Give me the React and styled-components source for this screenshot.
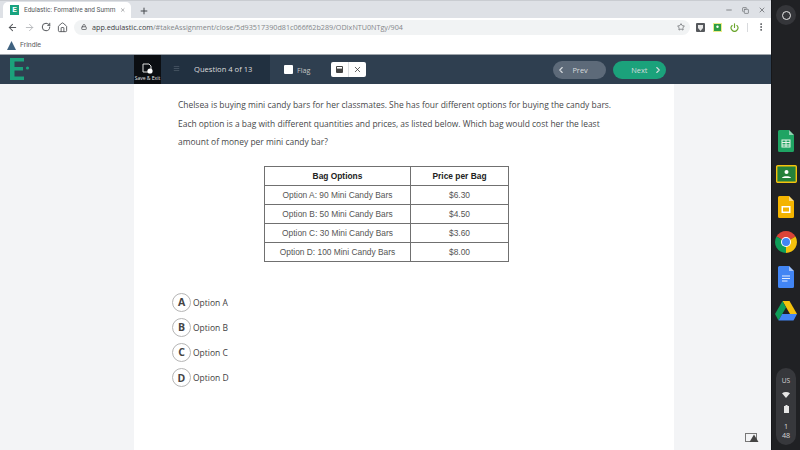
import React from "react";
import styled, { createGlobalStyle } from "styled-components";
import { ArrowLeft, ArrowRight, RotateCw, Home, Lock, Star, MoreVertical, Plus, X, Minus, Copy, ChevronLeft, ChevronRight, Menu, Power } from "lucide-react";

const Global = createGlobalStyle`
  html, body { margin: 0; padding: 0; width: 800px; height: 450px; overflow: hidden; background: #202124; }
  * { box-sizing: border-box; }
`;
const Screen = styled.div`display: flex; width: 800px; height: 450px; font-family: "Open Sans", sans-serif;`;
const Win = styled.div`width: 771px; display: flex; flex-direction: column; background: #fff;`;

const TabStrip = styled.div`height: 18px; background: #dee1e6; display: flex; align-items: flex-end; padding-left: 3px; border-top: 1px solid #c9ccd1; font-family: Roboto, sans-serif;`;
const Tab = styled.div`width: 128px; height: 16px; background: #fff; border-radius: 5px 5px 0 0; display: flex; align-items: center; padding: 0 5px 0 7px; gap: 5px; font-size: 6.5px; color: #55585c; white-space: nowrap;`;
const TabTitle = styled.span`flex: 1;`;
const Fav = styled.div`width: 9px; height: 10px; background: #19a37f; color: #fff; font-size: 8px; line-height: 10px; font-weight: 700; text-align: center; flex: none;`;
const NewTab = styled.div`margin: 0 0 2px 8px; display: flex; color: #45484c;`;
const WinBtns = styled.div`margin-left: auto; display: flex; gap: 9px; padding: 0 5px 4px 0; align-items: center; color: #55585c;`;

const Toolbar = styled.div`height: 18px; background: #fff; display: flex; align-items: center; padding-left: 7px;`;
const NavIcons = styled.div`display: flex; gap: 6px; color: #55585c; align-items: center; width: 67px;`;
const Omni = styled.div`width: 616px; height: 15px; border-radius: 8px; background: #f1f3f4; display: flex; align-items: center; padding: 0 5px 0 7px; font-size: 7.2px; color: #84878b; white-space: nowrap; gap: 5px;`;
const Host = styled.span`color: #3c4043;`;
const Url = styled.span`flex: 1;`;
const Exts = styled.div`display: flex; align-items: center; margin-left: 6px; gap: 8px; color: #55585c;`;
const ExtSvg = styled.svg`display: block;`;
const Sep = styled.div`width: 1px; height: 9px; background: #d8dadd;`;

const Bookmarks = styled.div`height: 19px; background: #fff; border-bottom: 1px solid #9ea4aa; display: flex; align-items: center; padding: 0 0 0 7px; gap: 4px; font-size: 7px; color: #5a5d61; font-family: Roboto, sans-serif;`;

const Nav = styled.div`height: 29px; background: #2f3f50; display: flex; align-items: stretch; padding-left: 10px; color: #fff;`;
const Logo = styled.div`width: 124px; display: flex; align-items: center; padding-bottom: 1px;`;
const LogoSvg = styled.svg`display: block;`;
const SaveExit = styled.div`width: 27px; background: #0b0e12; display: flex; flex-direction: column; align-items: center; justify-content: flex-end; padding-bottom: 3px; font-size: 5px; color: #e5e7ea; gap: 1px; white-space: nowrap;`;
const QuestionBox = styled.div`width: 109px; background: #213040; display: flex; align-items: center; padding-left: 12px; gap: 14px; font-size: 7.6px; color: #dcdcdc; padding-bottom: 2px;`;
const FlagWrap = styled.div`display: flex; align-items: center; margin-left: 14px; gap: 4px; font-size: 7.2px; color: #c4c4c4;`;
const Check = styled.div`width: 9px; height: 9px; background: #fff; border-radius: 1px;`;
const ToolGroup = styled.div`align-self: center; margin-left: 21px; width: 35px; height: 15px; background: #fff; border-radius: 2px; display: flex; color: #333;`;
const ToolCell = styled.div`flex: 1; display: flex; align-items: center; justify-content: center; & + & { border-left: 1px solid #dcdfe2; }`;
const NavBtns = styled.div`margin-left: 187px; display: flex; align-items: center; gap: 7px;`;
const Pill = styled.div`width: 53px; height: 18px; border-radius: 9px; background: ${p => p.$next ? "#1ba27b" : "#5d6a79"}; display: flex; align-items: center; justify-content: ${p => p.$next ? "flex-end" : "flex-start"}; padding: ${p => p.$next ? "0 3px 0 0" : "0 0 0 3px"}; gap: ${p => p.$next ? "6px" : "6px"}; font-size: 7.4px; color: #d8dcdf;`;

const Body = styled.div`flex: 1; display: flex; background: #f3f4f6;`;
const Sheet = styled.div`margin-left: 134px; width: 540px; background: #fff; padding: 12px 0 0 44px; color: #3f4042;`;
const Para = styled.p`margin: 0; width: 440px; font-size: 8.45px; line-height: 18.5px; color: #47484a;`;
const Tbl = styled.table`margin: 14px 0 0 86px; border-collapse: collapse; width: 245px; font-family: "Liberation Sans", sans-serif; font-size: 8.4px; color: #555;`;
const Th = styled.th`border: 1px solid #707070; height: 19px; padding: 0; color: #222; font-weight: 700; text-align: center;`;
const Td = styled.td`border: 1px solid #707070; height: 19px; padding: 0; text-align: center; width: ${p => p.$w || "auto"};`;
const Choices = styled.div`margin: 31px 0 0 -6px; display: flex; flex-direction: column; gap: 6.2px;`;
const Choice = styled.div`display: flex; align-items: center; gap: 2px; font-size: 8.5px; color: #3f4042; height: 19px;`;
const Letter = styled.div`width: 19px; height: 19px; border-radius: 50%; border: 1.3px solid #b5b5b5; background: #fff; display: flex; align-items: center; justify-content: center; font-size: 10.5px; font-weight: 700; color: #444;`;
const RightPane = styled.div`flex: 1; position: relative;`;
const NetBadge = styled.svg`position: absolute; right: 12px; bottom: 8px;`;

const Shelf = styled.div`flex: 1; background: #202124; display: flex; flex-direction: column; align-items: center; padding-top: 5px; border-left: 1px solid #16171a;`;
const Launcher = styled.div`width: 20px; height: 20px; border-radius: 50%; background: #35363a; display: flex; align-items: center; justify-content: center;`;
const Ring = styled.div`width: 9px; height: 9px; border-radius: 50%; border: 1.4px solid #e8e8e8;`;
const Apps = styled.div`margin-top: 105px; display: flex; flex-direction: column; gap: 13px; align-items: center;`;
const AppSlot = styled.div`position: relative; display: flex;`;
const RunDot = styled.span`position: absolute; right: -6px; top: 8px; width: 2px; height: 5px; background: #eee;`;
const AppIcon = styled.svg`display: block;`;
const Tray = styled.div`margin-top: auto; margin-bottom: 5px; width: 20px; height: 77px; border-radius: 10px; background: #37383c; color: #d5d6d8; display: flex; flex-direction: column; align-items: center; font-size: 6.6px; padding-top: 8px; gap: 7px;`;
const Clock = styled.div`text-align: center; line-height: 9px; font-size: 7.2px; margin-top: 2px;`;

const Doc = ({ c, children }) => (
  <AppIcon width="16" height="22" viewBox="0 0 16 22">
    <path d="M1.5 0H11l5 5v15.5a1.5 1.5 0 0 1-1.5 1.5h-13A1.5 1.5 0 0 1 0 20.5v-19A1.5 1.5 0 0 1 1.5 0z" fill={c} />
    <path d="M11 0l5 5h-5z" fill="#fff" opacity=".5" />
    {children}
  </AppIcon>
);

export default function App() {
  return (
    <Screen>
      <Global />
      <Win>
        <TabStrip>
          <Tab>
            <Fav>E</Fav>
            <TabTitle>Edulastic: Formative and Summ</TabTitle>
            <X size={8} strokeWidth={2} />
          </Tab>
          <NewTab><Plus size={10} strokeWidth={2.4} /></NewTab>
          <WinBtns>
            <Minus size={8} strokeWidth={2} />
            <Copy size={7} strokeWidth={2} />
            <X size={8} strokeWidth={2} />
          </WinBtns>
        </TabStrip>
        <Toolbar>
          <NavIcons>
            <ArrowLeft size={11} strokeWidth={2.2} />
            <ArrowRight size={11} strokeWidth={2} color="#b6b8bb" />
            <RotateCw size={10} strokeWidth={2.4} />
            <Home size={11} strokeWidth={2} />
          </NavIcons>
          <Omni>
            <Lock size={6} strokeWidth={3} color="#55585c" />
            <Url><Host>app.edulastic.com</Host>/#takeAssignment/close/5d93517390d81c066f62b289/ODIxNTU0NTgy/904</Url>
            <Star size={8} strokeWidth={2} color="#55585c" />
          </Omni>
          <Exts>
            <ExtSvg width="9" height="9" viewBox="0 0 9 9">
              <rect width="9" height="9" rx="1" fill="#55585c" />
              <path d="M2 2h5v3L4.5 8 2 5z" fill="#e8e8e8" />
            </ExtSvg>
            <ExtSvg width="9" height="9" viewBox="0 0 9 9">
              <rect width="9" height="9" fill="#ecec8a" />
              <rect x="1" y="1" width="7" height="7" fill="#2f9e44" />
              <circle cx="4.5" cy="3.8" r="1.2" fill="#fff" />
            </ExtSvg>
            <Power size={9} strokeWidth={3} color="#6aa52c" />
            <Sep />
            <MoreVertical size={10} strokeWidth={2.4} />
          </Exts>
        </Toolbar>
        <Bookmarks>
          <svg width="9" height="9" viewBox="0 0 9 9"><path d="M4.5 0L9 9H0z" fill="#3f6280" /></svg>
          Frindle
        </Bookmarks>
        <Nav>
          <Logo>
            <LogoSvg width="20" height="22" viewBox="0 0 20 22">
              <path d="M0 0h14v3.5H4.5V9H13v3.5H4.5v6H14V22H0z" fill="#1ba27b" />
              <circle cx="17.5" cy="10" r="1.6" fill="#1ba27b" />
            </LogoSvg>
          </Logo>
          <SaveExit>
            <svg width="11" height="11" viewBox="0 0 11 11" fill="none"><path d="M1 1h6l2 2v4M1 1v8h5" stroke="#ddd" strokeWidth="1" /><circle cx="8" cy="8" r="2.6" fill="#fff" /></svg>
            Save &amp; Exit
          </SaveExit>
          <QuestionBox>
            <Menu size={7} strokeWidth={2} color="#5b6876" />
            Question 4 of 13
          </QuestionBox>
          <FlagWrap><Check /> Flag</FlagWrap>
          <ToolGroup>
            <ToolCell>
              <svg width="7" height="7" viewBox="0 0 7 7"><rect width="7" height="7" rx="1" fill="#444" /><rect x="1" y="1" width="5" height="1.6" fill="#fff" /></svg>
            </ToolCell>
            <ToolCell><X size={9} strokeWidth={2} /></ToolCell>
          </ToolGroup>
          <NavBtns>
            <Pill><ChevronLeft size={10} strokeWidth={2.6} /> Prev</Pill>
            <Pill $next>Next <ChevronRight size={10} strokeWidth={2.6} /></Pill>
          </NavBtns>
        </Nav>
        <Body>
          <Sheet>
            <Para>Chelsea is buying mini candy bars for her classmates. She has four different options for buying the candy bars. Each option is a bag with different quantities and prices, as listed below. Which bag would cost her the least amount of money per mini candy bar?</Para>
            <Tbl>
              <thead>
                <tr><Th>Bag Options</Th><Th>Price per Bag</Th></tr>
              </thead>
              <tbody>
                <tr><Td $w="146px">Option A: 90 Mini Candy Bars</Td><Td>$6.30</Td></tr>
                <tr><Td>Option B: 50 Mini Candy Bars</Td><Td>$4.50</Td></tr>
                <tr><Td>Option C: 30 Mini Candy Bars</Td><Td>$3.60</Td></tr>
                <tr><Td>Option D: 100 Mini Candy Bars</Td><Td>$8.00</Td></tr>
              </tbody>
            </Tbl>
            <Choices>
              {["A", "B", "C", "D"].map(l => (
                <Choice key={l}><Letter>{l}</Letter>Option {l}</Choice>
              ))}
            </Choices>
          </Sheet>
          <RightPane>
            <NetBadge width="14" height="9" viewBox="0 0 14 9">
              <rect x=".5" y=".5" width="11" height="8" fill="none" stroke="#777" />
              <path d="M9 1.5l4.5 7.5h-9z" fill="#444" />
            </NetBadge>
          </RightPane>
        </Body>
      </Win>
      <Shelf>
        <Launcher><Ring /></Launcher>
        <Apps>
          <Doc c="#1fa463">
            <rect x="4" y="10" width="8" height="7" fill="none" stroke="#e8f5e9" strokeWidth="1" />
            <path d="M4 12.5h8M4 15h8M8 10v7" stroke="#e8f5e9" strokeWidth="1" />
          </Doc>
          <AppIcon width="21" height="18" viewBox="0 0 21 18">
            <rect x=".7" y=".7" width="19.6" height="16.6" rx="1" fill="#25803a" stroke="#f4c20d" strokeWidth="1.4" />
            <circle cx="10.5" cy="7" r="2" fill="#fff" />
            <path d="M6 13c0-2.5 9-2.5 9 0z" fill="#fff" />
          </AppIcon>
          <Doc c="#f4b400">
            <rect x="3.5" y="10" width="9" height="7" fill="#fff" />
            <rect x="5" y="11.5" width="6" height="4" fill="#f4b400" />
          </Doc>
          <AppSlot>
            <AppIcon width="22" height="22" viewBox="0 0 22 22">
              <path d="M11 11L1.5 5.5A11 11 0 0 1 20.5 5.5z" fill="#db4437" />
              <path d="M11 11L20.5 5.5A11 11 0 0 1 11 22z" fill="#f4c20d" />
              <path d="M11 11V22A11 11 0 0 1 1.5 5.5z" fill="#0f9d58" />
              <circle cx="11" cy="11" r="5" fill="#fff" />
              <circle cx="11" cy="11" r="4" fill="#4285f4" />
            </AppIcon>
            <RunDot />
          </AppSlot>
          <Doc c="#4285f4">
            <path d="M4 10h8M4 12.5h8M4 15h5.5" stroke="#e3ecfd" strokeWidth="1" />
          </Doc>
          <AppIcon width="22" height="20" viewBox="0 0 22 20">
            <path d="M7.5 0h7L22 13h-7z" fill="#f4c20d" />
            <path d="M7.5 0L0 13l3.5 6.5L11 6.5z" fill="#0f9d58" />
            <path d="M3.5 19.5h15L22 13H7.2z" fill="#4285f4" />
          </AppIcon>
        </Apps>
        <Tray>
          US
          <svg width="8" height="6" viewBox="0 0 8 6"><path d="M0 1.2C2.4-.4 5.6-.4 8 1.2L4 6z" fill="#e6e6e6" /></svg>
          <svg width="5" height="8" viewBox="0 0 5 8"><path d="M1.5 0h2v1H5v7H0V1h1.5z" fill="#e6e6e6" /></svg>
          <Clock>1<br />48</Clock>
        </Tray>
      </Shelf>
    </Screen>
  );
}
